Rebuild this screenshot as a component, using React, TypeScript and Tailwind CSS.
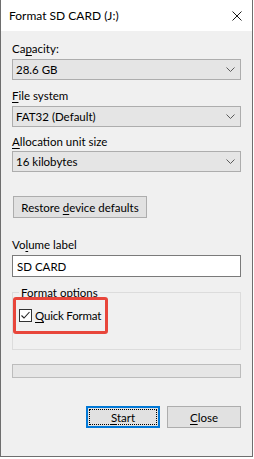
import React from 'react';

const font = "font-['Lato','Liberation_Sans',sans-serif]";

function Chevron() {
  return (
    <svg width="9" height="5" viewBox="0 0 9 5" className="shrink-0">
      <polyline points="0.5,0.5 4.5,4.5 8.5,0.5" fill="none" stroke="#5a5a5a" strokeWidth="1" />
    </svg>
  );
}

function Combo({ value }: { value: string }) {
  return (
    <div className="h-[21px] bg-[#e5e5e5] border border-[#adadad] flex items-center justify-between pl-[3px] pr-[5px] text-[11.5px] leading-[15px] text-black">
      <span>{value}</span>
      <Chevron />
    </div>
  );
}

function Label({ children, className = '' }: { children: React.ReactNode; className?: string }) {
  return <div className={`text-[11.5px] leading-[15px] text-black ${className}`}>{children}</div>;
}

function U({ children }: { children: React.ReactNode }) {
  return <span className="underline underline-offset-[2px] decoration-1">{children}</span>;
}

export default function App() {
  return (
    <div className={`${font} bg-white w-[254px] h-[459px]`}>
      <div className="relative w-[253px] h-[457px] bg-[#f0f0f0] border-x border-b border-[#6e6e6e] flex flex-col">
        {/* Title bar */}
        <div className="h-[31px] bg-white flex items-center justify-between pl-[8px] pr-[10px] shrink-0">
          <span className="text-[12px] leading-[15px] text-black">Format SD CARD (J:)</span>
          <svg width="10" height="10" viewBox="0 0 10 10">
            <path d="M0.5 0.5 L9.5 9.5 M9.5 0.5 L0.5 9.5" stroke="#1a1a1a" strokeWidth="1" />
          </svg>
        </div>

        <div className="px-[11px] flex flex-col">
          <Label className="mt-[10px] mb-[3px]">
            Ca<U>p</U>acity:
          </Label>
          <Combo value="28.6 GB" />

          <Label className="mt-[8px] mb-[3px]">
            <U>F</U>ile system
          </Label>
          <Combo value="FAT32 (Default)" />

          <Label className="mt-[7px] mb-[2px]">
            <U>A</U>llocation unit size
          </Label>
          <Combo value="16 kilobytes" />

          <div className="mt-[24px] ml-[1px] w-[134px] h-[22px] bg-[#e1e1e1] border border-[#adadad] flex items-center justify-center text-[11.5px] leading-[15px] text-black">
            <span>
              Restore <U>d</U>evice defaults
            </span>
          </div>

          <Label className="mt-[19px] mb-[3px]">
            Vo<U>l</U>ume label
          </Label>
          <div className="h-[22px] bg-white border border-[#7a7a7a] flex items-center pl-[4px] text-[11.5px] leading-[15px] text-black">
            SD CARD
          </div>

          <fieldset className="mt-[8px] border border-[#dcdcdc] pl-[6px] pb-[27px]">
            <legend className="px-[2px] text-[11.5px] leading-[15px] text-black">Format options</legend>
            <div className="mt-[9px] h-[13px] flex items-center gap-[3px]">
              <svg width="13" height="13" viewBox="0 0 13 13" className="shrink-0">
                <rect x="0.5" y="0.5" width="12" height="12" fill="#ffffff" stroke="#333333" />
                <polyline points="2.5,6.5 5,9 10.5,3" fill="none" stroke="#222222" strokeWidth="1.1" />
              </svg>
              <span className="text-[11.5px] leading-[15px] text-black tracking-[-0.2px]">
                <U>Q</U>uick Format
              </span>
            </div>
          </fieldset>

          <div className="mt-[14px] h-[14px] bg-[#e6e6e6] border border-[#bcbcbc]" />

          <div className="mt-[28px] flex justify-end gap-[7px]">
            <div className="w-[74px] h-[22px] bg-[#e1e1e1] border-2 border-[#0078d7] p-[1px]">
              <div className="h-full border border-dotted border-black flex items-center justify-center text-[11.5px] leading-[15px] text-black">
                <span>
                  <U>S</U>tart
                </span>
              </div>
            </div>
            <div className="w-[74px] h-[22px] bg-[#e1e1e1] border border-[#adadad] flex items-center justify-center text-[11.5px] leading-[15px] text-black">
              <span>
                <U>C</U>lose
              </span>
            </div>
          </div>
        </div>

        {/* Red highlight annotation */}
        <div className="absolute left-[12px] top-[297px] w-[95px] h-[37px] border-[3px] border-[#e8463b] rounded-[3px]" />
      </div>
    </div>
  );
}
